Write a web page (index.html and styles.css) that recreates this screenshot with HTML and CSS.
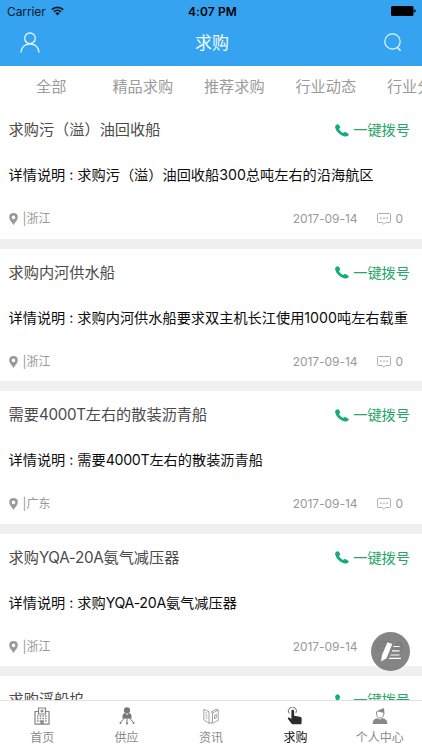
FILE: index.html
```html
<!DOCTYPE html>
<html lang="zh-CN">
<head>
<meta charset="utf-8">
<title>求购</title>
<link rel="stylesheet" href="styles.css">
</head>
<body>
<svg width="0" height="0" class="defs">
  <symbol id="phone" viewBox="0 0 14 13"><path d="M1.3.7C2.2 0 3.3-.1 3.9.8l1 1.700c.4.8.2 1.400-.4 2-.5.5-.4.8 0 1.500.8 1.200 1.800 2.100 3.100 2.700.5.2.8.1 1.200-.3.6-.6 1.300-.7 2-.2l2.200 1.400c.8.5.9 1.200.3 1.800-.9.9-2 1.400-3.400 1.100C5.400 11.500.7 7.200.1 2.900 0 2 .5 1.300 1.300.7z" fill="currentColor"/></symbol>
  <symbol id="pin" viewBox="0 0 9 12"><path fill-rule="evenodd" d="M4.500 0A4.300 4.300 0 0 0 .2 4.200C.2 7 3 9.200 4.500 12 6 9.200 8.800 7 8.800 4.200A4.300 4.300 0 0 0 4.500 0zm0 2.600a1.800 1.800 0 1 1 0 3.600 1.800 1.800 0 0 1 0-3.600z" fill="currentColor"/></symbol>
  <symbol id="chat" viewBox="0 0 14 12"><path d="M1.500.5h11q1 0 1 1v7q0 1-1 1H8.800L7 11.300 5.200 9.500H1.500q-1 0-1-1v-7q0-1 1-1z" fill="none" stroke="currentColor" stroke-width=".8"/><path d="M3.200 4.500h1.400v1.300H3.200zm3.100 0h1.400v1.300H6.300zm3.100 0h1.400v1.300H9.400z" fill="currentColor"/></symbol>
</svg>
<div class="app">
  <header class="header">
    <div class="status">
      <div class="carrier">Carrier
        <svg width="13" height="10" viewBox="0 0 13 10"><g fill="none" stroke="#071a29" stroke-width="1.700"><path d="M.8 3.600a8.200 8.200 0 0 1 11.400 0M2.900 5.900a5.200 5.200 0 0 1 7.200 0"/></g><path d="M4.300 7.200a3.200 3.200 0 0 1 4.400 0L6.500 9.600z" fill="#071a29"/></svg>
      </div>
      <div class="time">4:07 PM</div>
      <svg class="battery" width="25" height="10" viewBox="0 0 25 10"><rect width="22.500" height="10" rx="1.500"/><path d="M23.200 3.300q1.500.3 1.500 1.700t-1.500 1.700z"/></svg>
    </div>
    <div class="navbar">
      <svg width="20" height="21" viewBox="0 0 20 21" fill="none" stroke="#e2f8ff" stroke-width="1.300"><circle cx="10" cy="6.300" r="5.300"/><path d="M1 20.500c.3-5.300 3.900-8.500 9-8.500s8.700 3.200 9 8.500"/></svg>
      <h1>求购</h1>
      <svg width="18" height="19" viewBox="0 0 18 19" fill="none" stroke="#e2f8ff" stroke-width="1.200"><circle cx="8.500" cy="8.500" r="7.700"/><path d="M13 14l3.600 3.800" stroke-width="1.500"/></svg>
    </div>
  </header>
  <nav class="cats"><span>全部</span><span>精品求购</span><span>推荐求购</span><span>行业动态</span><span>行业分析</span></nav>
  <main class="list">
    <article class="card">
      <div class="row"><h2>求购污（溢）油回收船</h2><a class="dial"><svg width="14" height="13"><use href="#phone"/></svg>一键拨号</a></div>
      <p>详情说明 : 求购污（溢）油回收船300总吨左右的沿海航区</p>
      <div class="meta"><svg width="9" height="12"><use href="#pin"/></svg><span class="place">|浙江</span><time>2017-09-14</time><svg width="14" height="12"><use href="#chat"/></svg><span class="count">0</span></div>
    </article>
    <article class="card">
      <div class="row"><h2>求购内河供水船</h2><a class="dial"><svg width="14" height="13"><use href="#phone"/></svg>一键拨号</a></div>
      <p>详情说明 : 求购内河供水船要求双主机长江使用1000吨左右载重</p>
      <div class="meta"><svg width="9" height="12"><use href="#pin"/></svg><span class="place">|浙江</span><time>2017-09-14</time><svg width="14" height="12"><use href="#chat"/></svg><span class="count">0</span></div>
    </article>
    <article class="card">
      <div class="row"><h2>需要<span class="latin">4000T</span>左右的散装沥青船</h2><a class="dial"><svg width="14" height="13"><use href="#phone"/></svg>一键拨号</a></div>
      <p>详情说明 : 需要<span class="latin">4000T</span>左右的散装沥青船</p>
      <div class="meta"><svg width="9" height="12"><use href="#pin"/></svg><span class="place">|广东</span><time>2017-09-14</time><svg width="14" height="12"><use href="#chat"/></svg><span class="count">0</span></div>
    </article>
    <article class="card">
      <div class="row"><h2>求购<span class="latin">YQA-20A</span>氨气减压器</h2><a class="dial"><svg width="14" height="13"><use href="#phone"/></svg>一键拨号</a></div>
      <p>详情说明 : 求购<span class="latin">YQA-20A</span>氨气减压器</p>
      <div class="meta"><svg width="9" height="12"><use href="#pin"/></svg><span class="place">|浙江</span><time>2017-09-14</time><svg width="14" height="12"><use href="#chat"/></svg><span class="count">0</span></div>
    </article>
    <article class="card">
      <div class="row"><h2>求购浮船坞</h2><a class="dial"><svg width="14" height="13"><use href="#phone"/></svg>一键拨号</a></div>
    </article>
  </main>
  <footer class="tabbar">
    <div class="tab"><svg width="18" height="18" viewBox="0 0 18 18"><path d="M5 4.500H2v12.700h14V4.500h-3M5.500 7V1h7v6z" fill="none" stroke="#858585" stroke-width="1.200"/><path d="M7.500 4h3M9 2.500v3" stroke="#858585" stroke-width="1.300" fill="none"/><path d="M4 9h10M4 11.500h10M4 14h10" stroke="#858585" stroke-width="1.500" stroke-dasharray="1.500 1.200"/><path d="M7.500 13.500h3V17h-3z" fill="#858585"/></svg>首页</div>
    <div class="tab"><svg width="18" height="18" viewBox="0 0 18 18"><circle cx="9" cy="3.400" r="3.100" fill="#777"/><path d="M4.500 11.500V9q0-2.500 2.500-2.900L9 8l2-1.900q2.500.4 2.500 2.900v2.500z" fill="#777"/><path d="M9 11v5M6.500 11l-4 4.500M11.500 11l4 4.500" stroke="#777" stroke-width="1"/><g fill="#777"><circle cx="9" cy="16.500" r="1"/><circle cx="2.500" cy="16" r="1"/><circle cx="15.500" cy="16" r="1"/></g></svg>供应</div>
    <div class="tab"><svg width="18" height="18" viewBox="0 0 18 18" fill="none" stroke="#999" stroke-width=".9"><path d="M1.800 2.200L7 4.800v11.500L1.800 12.800zM7 16.300l3.500-1.200V6l5.700-3v10.300l-5.700 3L9 15.600M10.500 6L9 5l5-2.800 2.200.8M3.400 5.500l2 1M3.400 8l2 1M3.400 10.500l2 1M12.500 8.300v3.500l1.800-1V7.300z"/></svg>资讯</div>
    <div class="tab active"><svg width="18" height="20" viewBox="0 0 18 20"><path d="M2.600 7.300A4.500 4.500 0 1 1 10 6.700" fill="none" stroke="#666" stroke-width="1.100"/><path d="M5 4.500c0-2.100 3-2.100 3 0v5.200l6.500 1.100q2 .4 2 2.200l-.3 5.200q-.1 1-1 1H6.600q-.8 0-1.300-.7L1.200 13.300c-.7-1.300.9-2.300 1.900-1.300L5 13.400z" fill="#2c2c2c"/></svg>求购</div>
    <div class="tab"><svg width="18" height="18" viewBox="0 0 18 18"><path d="M4.500 4.500L13 1 13.500 6.200 8.500 4.700z" fill="#888"/><path d="M5.500 5q-.3 6 3.700 6 3.300 0 3.800-5" fill="none" stroke="#888" stroke-width="1"/><path d="M1.500 17q.2-5.200 5-5.700L9 12.600l2.500-1.300q4.800.5 5 5.700z" fill="#888"/></svg>个人中心</div>
  </footer>
  <button class="compose" aria-label="发布"><svg width="24" height="22" viewBox="0 0 24 22"><path d="M8.500 1.200L13.300 3 7.500 17.200 2 20.500l1-6.500z" fill="#fff"/><path d="M14.500 5.500h6M13 9.800h7.500M11.500 14h9M10 17.300h12" stroke="#fff" stroke-width="1.200"/></svg></button>
</div>
</body>
</html>
```
FILE: styles.css
```css
* { box-sizing: border-box; }
body { margin: 0; font-family: Inter, "Noto Sans CJK SC", sans-serif; background: #fff; }
h1, h2, p { margin: 0; font-weight: 400; }
svg { display: block; flex: none; }
.defs { position: absolute; }
.app { position: relative; width: 422px; height: 750px; overflow: hidden; display: flex; flex-direction: column; }

.header { flex: none; height: 66px; background: #35a3f0; }
.status { height: 22px; padding: 0 6px 0 7px; display: grid; grid-template-columns: 1fr auto 1fr; align-items: center; color: #071a29; font-size: 12px; }
.carrier { display: flex; align-items: center; gap: 5px; letter-spacing: -.1px; }
.time { font-weight: 600; color: #000; letter-spacing: .1px; margin-left: 2px; }
.battery { justify-self: end; }
.navbar { height: 44px; padding: 0 20px; display: flex; align-items: center; justify-content: space-between; }
.navbar svg { margin-top: -4px; }
.navbar h1 { font-size: 17px; line-height: 42px; height: 44px; color: #f0fbff; }

.cats { flex: none; height: 40px; padding-left: 5.500px; display: flex; overflow: hidden; }
.cats span { flex: none; width: 91.500px; text-align: center; white-space: nowrap; font-size: 15.200px; line-height: 42px; color: #9b9b9b; }

.list { flex: 1; min-height: 0; overflow: hidden; }
.card { height: 142.500px; padding: 12px 12px 0 8.500px; border-bottom: 10px solid #f0f0f0; }
.row { height: 24px; display: flex; align-items: center; justify-content: space-between; }
.row h2 { font-size: 15.200px; line-height: 24px; color: #4a4a4a; }
.latin { letter-spacing: -.3px; }
.dial { display: flex; align-items: center; gap: 4px; font-size: 14.200px; line-height: 24px; color: #27a668; }
.dial svg { color: #12ad7c; }
.card p { margin-top: 21px; font-size: 14.200px; line-height: 24px; color: #0c0c0c; white-space: nowrap; }
.meta { margin-top: 21px; height: 22px; display: flex; align-items: center; font-size: 12px; line-height: 22px; color: #999; padding-right: 7px; }
.place { margin-left: 5px; flex: 1; }
.meta time { margin-right: 20px; letter-spacing: -.05px; }
.count { margin-left: 4px; }

.tabbar { flex: none; height: 50px; border-top: 1px solid #e0e0e0; display: flex; background: #fff; }
.tab { flex: 1; display: flex; flex-direction: column; align-items: center; padding-top: 6px; font-size: 12px; line-height: 18px; color: #8a8a8a; }
.tab svg { height: 18px; margin-bottom: 4px; }
.tab.active { color: #111; }
.compose { position: absolute; left: 371px; top: 632px; width: 39px; height: 39px; padding: 0; border: 0; border-radius: 50%; background: rgba(110, 110, 110, .84); display: flex; align-items: center; justify-content: center; }
```
